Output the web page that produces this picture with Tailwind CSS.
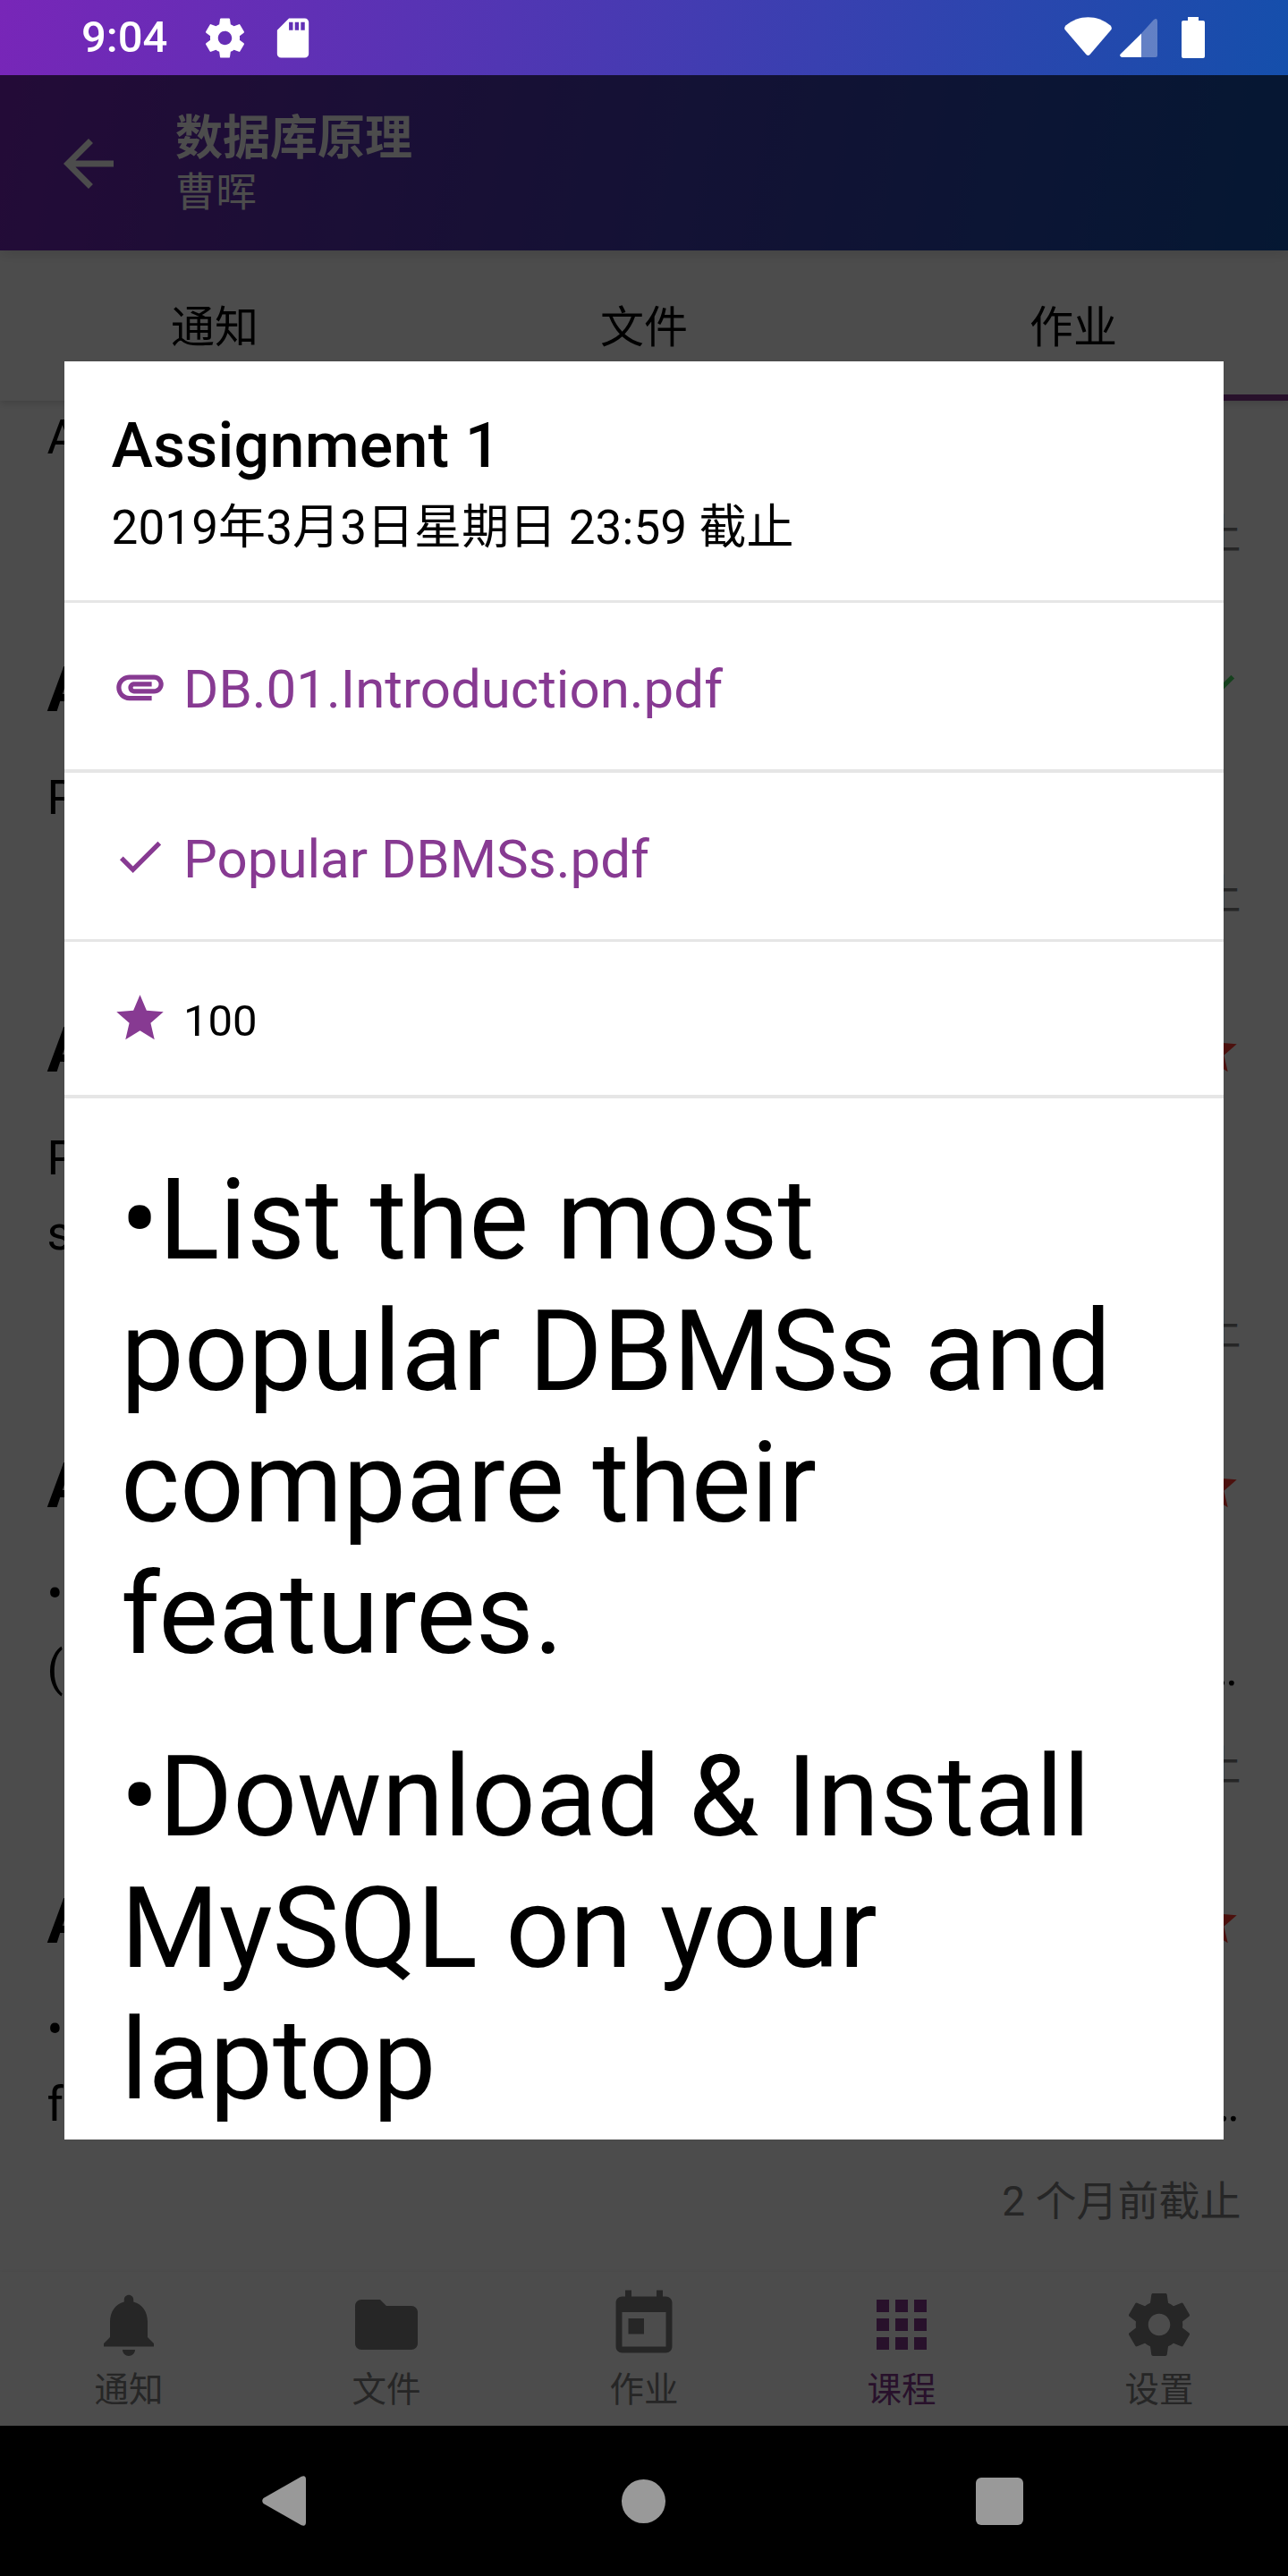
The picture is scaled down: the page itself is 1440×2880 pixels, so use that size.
<!DOCTYPE html>
<html lang="zh-CN">
<head>
<meta charset="utf-8">
<title>数据库原理</title>
<script src="https://cdn.jsdelivr.net/npm/@tailwindcss/browser@4"></script>
</head>
<body class="bg-black">
<svg class="hidden">
  <symbol id="gear" viewBox="0 0 24 24"><path d="M19.43 12.98c.04-.32.07-.64.07-.98s-.03-.66-.07-.98l2.11-1.65c.19-.15.24-.42.12-.64l-2-3.46c-.12-.22-.39-.3-.61-.22l-2.49 1c-.52-.4-1.08-.73-1.69-.98l-.38-2.65C14.46 2.18 14.25 2 14 2h-4c-.25 0-.46.18-.49.42l-.38 2.65c-.61.25-1.17.59-1.69.98l-2.49-1c-.23-.09-.49 0-.61.22l-2 3.46c-.13.22-.07.49.12.64l2.11 1.65c-.04.32-.07.65-.07.98s.03.66.07.98l-2.11 1.65c-.19.15-.24.42-.12.64l2 3.46c.12.22.39.3.61.22l2.49-1c.52.4 1.08.73 1.69.98l.38 2.65c.03.24.24.42.49.42h4c.25 0 .46-.18.49-.42l.38-2.65c.61-.25 1.17-.59 1.69-.98l2.49 1c.23.09.49 0 .61-.22l2-3.46c.12-.22.07-.49-.12-.64l-2.11-1.65zM12 15.5c-1.93 0-3.5-1.57-3.5-3.5s1.57-3.5 3.5-3.5 3.5 1.57 3.5 3.5-1.57 3.5-3.5 3.5z"/></symbol>
  <symbol id="star" viewBox="0 0 24 24"><path d="M12 17.27 18.18 21l-1.64-7.03L22 9.24l-7.19-.61L12 2 9.19 8.63 2 9.24l5.46 4.73L5.82 21z"/></symbol>
  <symbol id="check" viewBox="0 0 24 24"><path d="M9 16.17 4.83 12l-1.42 1.41L9 19 21 7l-1.41-1.41z"/></symbol>
</svg>
<div class="relative flex h-[2880px] w-[1440px] flex-col overflow-hidden bg-white font-['Roboto','Noto_Sans_CJK_SC',sans-serif] text-black">

  <header class="relative z-10 flex h-[280px] shrink-0 flex-col bg-[linear-gradient(101deg,#7826b8,#1250ab)] text-white shadow-[0_4px_14px_rgba(0,0,0,0.12)]">
    <div class="flex h-[84px] items-center pl-[91px] pr-[93px]">
      <span class="w-[134px] text-[49px] font-medium leading-[84px]">9:04</span>
      <svg class="size-[53px] fill-white"><use href="#gear"/></svg>
      <svg class="ml-[23px] size-[53px] fill-white" viewBox="0 0 24 24"><path d="M18 2h-8L4.02 8 4 20c0 1.1.9 2 2 2h12c1.1 0 2-.9 2-2V4c0-1.1-.9-2-2-2zm-6 6h-2V4h2v4zm3 0h-2V4h2v4zm3 0h-2V4h2v4z"/></svg>
      <svg class="ml-auto h-[46px] w-[53px] fill-white" viewBox="0 0 53 46"><path d="M1.5 9.5C16-3 37-3 51.5 9.5Q53.500 11.5 52.500 14L28.500 42Q26.500 44 24.500 42L.5 14Q-.5 11.5 1.5 9.5z"/></svg>
      <svg class="ml-[9px] h-[46px] w-[42px] fill-white" viewBox="0 0 42 46"><path class="opacity-30" d="M24 18.500 37.500 3.500Q42 0 42 5V43Q42 45 40 45H24z"/><path d="M24 18.500V45H2Q-1 44 .7 41.500z"/></svg>
      <svg class="ml-[27px] h-[46px] w-[26px] fill-white" viewBox="0 0 26 46"><path d="M7 0h12v4h5q2 0 2 2v38q0 2-2 2H2q-2 0-2-2V6q0-2 2-2h5z"/></svg>
    </div>
    <div class="flex h-[196px] items-center pl-[57px]">
      <svg class="mt-[2px] size-[84px] fill-white" viewBox="0 0 24 24"><path d="M20 11H7.83l5.59-5.59L12 4l-8 8 8 8 1.41-1.41L7.83 13H20v-2z"/></svg>
      <div class="ml-[55px] flex flex-col pt-1">
        <h1 class="text-[53px] font-bold leading-[64px]">数据库原理</h1>
        <p class="text-[45.5px] leading-[58px]">曹晖</p>
      </div>
    </div>
  </header>

  <nav class="relative z-[5] grid h-[168px] shrink-0 grid-cols-3 bg-white text-[49px] leading-[58px] shadow-[0_3px_8px_rgba(0,0,0,0.15)]">
    <span class="flex items-center justify-center pt-[6px]">通知</span>
    <span class="flex items-center justify-center pt-[6px]">文件</span>
    <span class="flex items-center justify-center pt-[6px] shadow-[inset_0_-7px_0_#873a92]">作业</span>
  </nav>

  <main class="h-[2092px] shrink-0 overflow-hidden px-[52.5px]">
    <div class="-mt-[121px] flex flex-col gap-[106.5px]">
      <article>
        <div class="flex h-[82px] items-center justify-between text-[70px] font-bold leading-[82px]"><h2>Assignment 5</h2></div>
        <p class="mt-[38px] text-[53px] leading-[84px]">As</p>
        <p class="mt-[38.5px] text-right text-[46px] leading-[54px] text-[#808080]">9 天前截止</p>
      </article>
      <article>
        <div class="flex h-[82px] items-center justify-between text-[70px] font-bold leading-[82px]"><h2>Assignment 4</h2><svg class="size-[63px] fill-[#4cd964]"><use href="#check"/></svg></div>
        <p class="mt-[38px] text-[53px] leading-[84px]">Please</p>
        <p class="mt-[38.5px] text-right text-[46px] leading-[54px] text-[#808080]">1 个月前截止</p>
      </article>
      <article>
        <div class="flex h-[82px] items-center justify-between text-[70px] font-bold leading-[82px]"><h2>Assignment 3</h2><svg class="size-[63px] fill-[#ff3b30]"><use href="#star"/></svg></div>
        <p class="mt-[38px] text-[53px] leading-[84px]">Please<br>submit</p>
        <p class="mt-[38.5px] text-right text-[46px] leading-[54px] text-[#808080]">1 个月前截止</p>
      </article>
      <article>
        <div class="flex h-[82px] items-center justify-between text-[70px] font-bold leading-[82px]"><h2>Assignment 2</h2><svg class="size-[63px] fill-[#ff3b30]"><use href="#star"/></svg></div>
        <p class="mt-[38px] text-[53px] leading-[84px]">•</p>
        <p class="flex justify-between pr-[4px] text-[53px] leading-[84px]"><span>(</span><span>…</span></p>
        <p class="mt-[38.5px] text-right text-[46px] leading-[54px] text-[#808080]">2 个月前截止</p>
      </article>
      <article>
        <div class="flex h-[82px] items-center justify-between text-[70px] font-bold leading-[82px]"><h2>Assignment 1</h2><svg class="size-[63px] fill-[#ff3b30]"><use href="#star"/></svg></div>
        <p class="mt-[38px] text-[53px] leading-[84px]">•List</p>
        <p class="flex justify-between pr-[2px] text-[53px] leading-[84px]"><span>f</span><span>…</span></p>
        <p class="mt-[38.5px] text-right text-[46px] leading-[54px] text-[#808080]">2 个月前截止</p>
      </article>
    </div>
  </main>

  <nav class="grid h-[172px] shrink-0 grid-cols-5 bg-white fill-[#808080] text-[38.5px] leading-[56px] text-[#808080] shadow-[0_-1px_4px_rgba(0,0,0,0.05)]">
    <div class="flex flex-col items-center gap-[3px] pt-[16.5px]">
      <svg class="size-[84px]" viewBox="0 0 24 24"><path d="M12 22c1.1 0 2-.9 2-2h-4c0 1.1.9 2 2 2zm6-6v-5c0-3.07-1.64-5.64-4.5-6.32V4c0-.83-.67-1.5-1.5-1.5s-1.5.67-1.5 1.5v.68C7.63 5.36 6 7.92 6 11v5l-2 2v1h16v-1l-2-2z"/></svg>
      <span>通知</span>
    </div>
    <div class="flex flex-col items-center gap-[3px] pt-[16.5px]">
      <svg class="size-[84px]" viewBox="0 0 24 24"><path d="M10 4H4c-1.1 0-1.99.9-1.99 2L2 18c0 1.1.9 2 2 2h16c1.1 0 2-.9 2-2V8c0-1.1-.9-2-2-2h-8l-2-2z"/></svg>
      <span>文件</span>
    </div>
    <div class="flex flex-col items-center gap-[3px] pt-[16.5px]">
      <svg class="size-[84px]" viewBox="0 0 24 24"><path d="M19 3h-1V1h-2v2H8V1H6v2H5c-1.11 0-1.99.9-1.99 2L3 19c0 1.1.89 2 2 2h14c1.1 0 2-.9 2-2V5c0-1.1-.9-2-2-2zm0 16H5V8h14v11zM7 10h5v5H7z"/></svg>
      <span>作业</span>
    </div>
    <div class="flex flex-col items-center gap-[3px] fill-[#873a92] pt-[16.5px] text-[#873a92]">
      <svg class="size-[84px]" viewBox="0 0 24 24"><path d="M4 8h4V4H4v4zm6 12h4v-4h-4v4zm-6 0h4v-4H4v4zm0-6h4v-4H4v4zm6 0h4v-4h-4v4zm6-10v4h4V4h-4zm-6 4h4V4h-4v4zm6 6h4v-4h-4v4zm0 6h4v-4h-4v4z"/></svg>
      <span>课程</span>
    </div>
    <div class="flex flex-col items-center gap-[3px] pt-[16.5px]">
      <svg class="size-[84px]"><use href="#gear"/></svg>
      <span>设置</span>
    </div>
  </nav>

  <div class="flex h-[168px] shrink-0 items-center bg-black fill-[#999] pl-[293px]">
    <svg class="h-[56px] w-[49px]" viewBox="0 0 49 56"><path d="M44 .8Q49-1 49 4V52Q49 57 44 55.200L1.500 31Q-1 28 1.500 25z"/></svg>
    <div class="ml-[353px] size-[49px] rounded-full bg-[#999]"></div>
    <div class="ml-[347px] size-[53px] rounded-[6px] bg-[#999]"></div>
  </div>

  <!-- modal backdrop and dialog -->
  <div class="absolute inset-x-0 top-[84px] z-20 flex h-[2628px] items-start justify-center bg-black/70 pt-[320px]">
    <section class="flex h-[1988px] w-[1296px] flex-col overflow-hidden bg-white">
      <div class="h-[270px] shrink-0 border-b-[3px] border-[#e6e6e6] pl-[52.5px] pt-[53px]">
        <h2 class="text-[70px] font-medium leading-[82px] tracking-[0.2px]">Assignment 1</h2>
        <p class="mt-[18px] text-[53px] leading-[66px] tracking-[0.1px]">2019年3月3日星期日 23:59 截止</p>
      </div>
      <div class="flex h-[190px] shrink-0 items-center gap-[17.5px] border-b-4 border-[#e6e6e6] pl-[52.5px] text-[#873a92]">
        <svg class="size-[63px] fill-[#873a92]" viewBox="0 0 24 24"><path d="M2 12.5C2 9.46 4.46 7 7.5 7H18c2.21 0 4 1.79 4 4s-1.79 4-4 4H9.5C8.12 15 7 13.88 7 12.5S8.12 10 9.5 10H17v2H9.41c-.55 0-.55 1 0 1H18c1.1 0 2-.9 2-2s-.9-2-2-2H7.5C5.57 9 4 10.57 4 12.5S5.57 16 7.5 16H17v2H7.5C4.46 18 2 15.54 2 12.5z"/></svg>
        <a class="pt-[7px] text-[60px] leading-[70px]">DB.01.Introduction.pdf</a>
      </div>
      <div class="flex h-[189px] shrink-0 items-center gap-[17.5px] border-b-[3px] border-[#e6e6e6] pl-[52.5px] text-[#873a92]">
        <svg class="size-[63px] fill-[#873a92]"><use href="#check"/></svg>
        <a class="pt-[7px] text-[60px] leading-[70px]">Popular DBMSs.pdf</a>
      </div>
      <div class="flex h-[175px] shrink-0 items-center gap-[17.5px] border-b-4 border-[#e6e6e6] pl-[52.5px]">
        <svg class="size-[63px] fill-[#873a92]"><use href="#star"/></svg>
        <span class="pt-[6px] text-[49px] leading-[58px]">100</span>
      </div>
      <div class="flex flex-col gap-[57px] pl-[63px] pt-[63px] text-[126px] leading-[147px]">
        <p>•List the most<br>popular DBMSs and<br>compare their<br>features.</p>
        <p>•Download &amp; Install<br>MySQL on your<br>laptop</p>
      </div>
    </section>
  </div>
</div>
</body>
</html>
